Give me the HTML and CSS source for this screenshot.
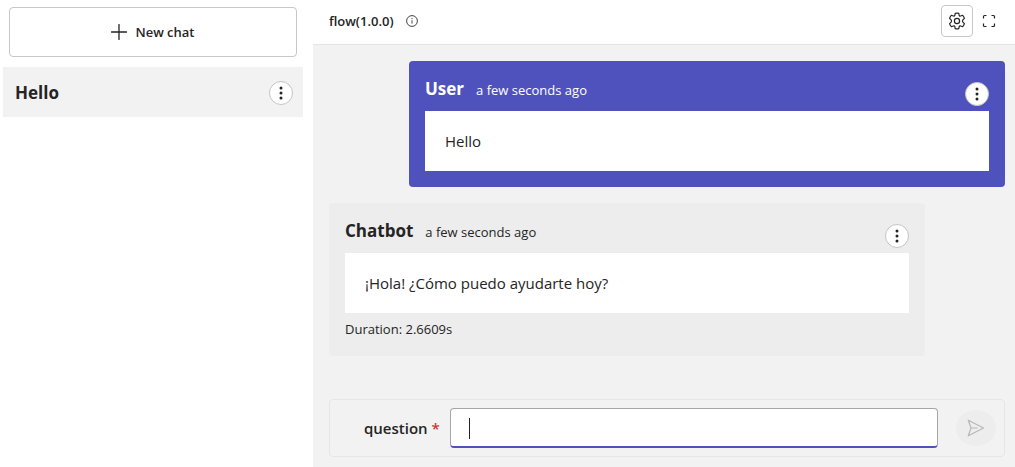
FILE: index.html
```
<!DOCTYPE html>
<html lang="en">
<head>
<meta charset="utf-8">
<title>flow(1.0.0)</title>
<link rel="stylesheet" href="styles.css">
</head>
<body>
<svg class="defs" aria-hidden="true">
  <symbol id="dots" viewBox="0 0 16 16"><circle cx="8" cy="3" r="1.5"/><circle cx="8" cy="8" r="1.5"/><circle cx="8" cy="13" r="1.5"/></symbol>
</svg>
<div class="app">
  <aside class="sidebar">
    <button class="new-chat" type="button">
      <svg class="plus" viewBox="0 0 16 16"><path d="M8 .5v15M.5 8h15"/></svg>
      New chat
    </button>
    <div class="chat-item">
      <span class="chat-name">Hello</span>
      <button class="more" type="button" aria-label="Chat options"><svg><use href="#dots"/></svg></button>
    </div>
  </aside>
  <main class="main">
    <header class="topbar">
      <span class="flow-name">flow(1.0.0)</span>
      <svg class="info" viewBox="0 0 12 12"><circle cx="6" cy="6" r="5.4"/><path d="M6 5.3v3.3"/><circle class="fill" cx="6" cy="3.6" r=".7"/></svg>
      <button class="tool boxed" type="button" aria-label="Settings">
        <svg viewBox="0 0 18 18"><path d="M7.200 1.400Q9 1 10.800 1.400L11.200 3.500Q11.500 4.300 12.600 4.000L14.700 3.300Q15.900 4.600 16.400 6.300L14.900 7.800Q14 9 14.900 10.200L16.400 11.700Q15.900 13.400 14.700 14.700L12.600 14.000Q11.500 13.700 11.200 14.500L10.800 16.600Q9 17 7.200 16.600L6.800 14.500Q6.500 13.700 5.400 14L3.300 14.700Q2.100 13.400 1.600 11.700L3.100 10.200Q4 9 3.100 7.800L1.600 6.300Q2.100 4.600 3.300 3.300L5.400 4Q6.500 4.300 6.800 3.500Z"/><circle cx="9" cy="9" r="2.600"/></svg>
      </button>
      <button class="tool" type="button" aria-label="Full screen">
        <svg viewBox="0 0 18 18"><path d="M3.500 6.500V4.500a1 1 0 0 1 1-1H6.500M11.500 3.500h2a1 1 0 0 1 1 1V6.500M14.500 11.500v2a1 1 0 0 1-1 1H11.500M6.500 14.500H4.500a1 1 0 0 1-1-1V11.500"/></svg>
      </button>
    </header>
    <section class="messages">
      <article class="message user">
        <div class="message-head">
          <span class="author">User</span>
          <span class="time">a few seconds ago</span>
          <button class="more" type="button" aria-label="Message options"><svg><use href="#dots"/></svg></button>
        </div>
        <div class="bubble">Hello</div>
      </article>
      <article class="message bot">
        <div class="message-head">
          <span class="author">Chatbot</span>
          <span class="time">a few seconds ago</span>
          <button class="more" type="button" aria-label="Message options"><svg><use href="#dots"/></svg></button>
        </div>
        <div class="bubble">¡Hola! ¿Cómo puedo ayudarte hoy?</div>
        <div class="duration">Duration: 2.6609s</div>
      </article>
    </section>
    <form class="composer">
      <label class="label" for="question">question <span class="required">*</span></label>
      <div class="field"><input id="question" type="text" required><span class="caret"></span></div>
      <button class="send" type="button" aria-label="Send" disabled>
        <svg viewBox="0 0 18 18"><path d="M1.300 1.300L16.500 9L1.300 16.700L4 9ZM4 9h6.500"/></svg>
      </button>
    </form>
  </main>
</div>
</body>
</html>
```
FILE: styles.css
```
* { box-sizing: border-box; }
body {
  margin: 0;
  background: #fff;
  color: #242424;
  font: 14px/20px "Open Sans", "Noto Sans", sans-serif;
}
button, input { font: inherit; color: inherit; }
button { padding: 0; }
.defs { position: absolute; width: 0; height: 0; }

.app { display: flex; min-height: 100vh; }
.sidebar { flex: 0 0 313px; padding: 7px 10px 0 3px; }
.new-chat {
  display: flex;
  align-items: center;
  justify-content: center;
  gap: 8px;
  width: calc(100% - 12px);
  height: 50px;
  margin: 0 6px 10px;
  background: #fff;
  border: 1px solid #c7c7c7;
  border-radius: 4px;
  font-size: 13px;
  font-weight: 600;
}
.plus { width: 16px; height: 16px; fill: none; stroke: #242424; stroke-width: 1.3; stroke-linecap: round; }
.chat-item {
  display: flex;
  align-items: center;
  justify-content: space-between;
  height: 50px;
  padding: 2px 10px 0 12px;
  background: #f2f2f2;
}
.chat-name { font-size: 17px; font-weight: 700; }
.more {
  display: grid;
  place-items: center;
  width: 24px;
  height: 24px;
  background: #fff;
  border: 1px solid #c4c4c4;
  border-radius: 50%;
}
.more svg { width: 16px; height: 16px; fill: #242424; }

.main { flex: 1; min-width: 0; display: flex; flex-direction: column; background: #f2f2f2; }
.topbar {
  display: flex;
  align-items: center;
  height: 45px;
  padding: 0 10px 2px 16px;
  background: #fff;
  border-bottom: 1px solid #e4e4e4;
}
.flow-name { font-size: 13px; font-weight: 600; }
.info { width: 12px; height: 12px; margin: 0 auto 0 12px; fill: none; stroke: #424242; stroke-width: 1; }
.info .fill { fill: #424242; stroke: none; }
.tool {
  display: grid;
  place-items: center;
  width: 32px;
  height: 32px;
  background: #fff;
  border: 1px solid transparent;
  border-radius: 4px;
}
.tool.boxed { border-color: #c7c7c7; }
.tool svg { width: 18px; height: 18px; fill: none; stroke: #242424; stroke-width: 1.2; stroke-linejoin: round; }

.messages { flex: 1; display: flex; flex-direction: column; gap: 16px; padding: 16px 10px 16px 16px; }
.message { padding: 16px; border-radius: 4px; }
.user { margin-left: 80px; background: #4f52bd; color: #fff; }
.bot { margin-right: 80px; background: #ededed; }
.message-head { display: flex; align-items: center; gap: 12px; height: 34px; }
.author { height: 34px; font-size: 17px; line-height: 24px; font-weight: 700; }
.time { height: 32px; font-size: 13px; line-height: 24px; }
.message-head .more { margin-left: auto; }
.bubble { padding: 20px; background: #fff; color: #242424; font-size: 15px; }
.duration { padding-top: 6px; height: 27px; font-size: 13px; }

.composer {
  display: flex;
  align-items: center;
  height: 58px;
  margin: 0 10px 10px 16px;
  padding: 0 8px 0 34px;
  border: 1px solid #e6e6e6;
  border-radius: 4px;
}
.label { flex: none; width: 86px; font-size: 15px; font-weight: 600; white-space: nowrap; }
.required { color: #d13438; }
.field { position: relative; flex: 1; min-width: 0; }
.field input {
  display: block;
  width: 100%;
  height: 40px;
  padding: 0 18px;
  background: #fff;
  border: 1px solid #a6a6a6;
  border-bottom: 2px solid #4f52bd;
  border-radius: 4px;
  outline: none;
}
.caret { position: absolute; left: 19px; top: 10px; width: 1px; height: 21px; background: #242424; }
.send {
  display: grid;
  place-items: center;
  width: 40px;
  height: 36px;
  margin-left: 18px;
  background: #ededed;
  border: 0;
  border-radius: 50%;
}
.send svg { width: 18px; height: 18px; fill: none; stroke: #b8b8b8; stroke-width: 1.2; stroke-linejoin: round; }
```
